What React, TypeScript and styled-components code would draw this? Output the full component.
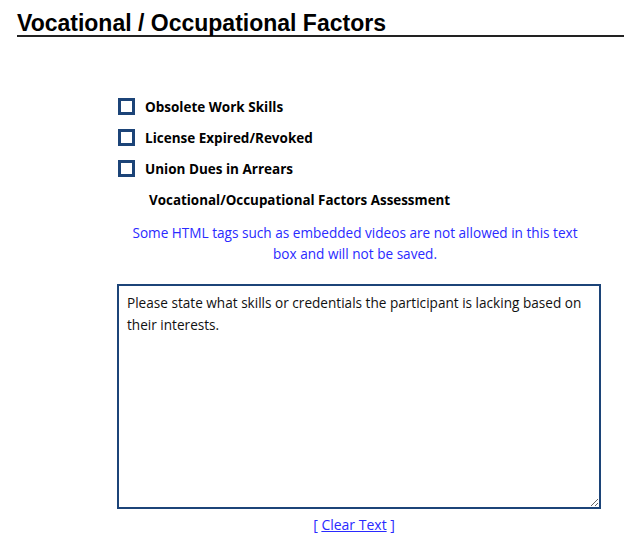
import React from 'react';
import styled, {createGlobalStyle} from "styled-components";

const GlobalStyle = createGlobalStyle`
  body {
    margin: 0;
    background: #ffffff;
    font-family: "Open Sans", "Noto Sans", sans-serif;
  }
`

const factors = [
    'Obsolete Work Skills',
    'License Expired/Revoked',
    'Union Dues in Arrears',
]

export default function App() {
    return (
        <Page>
            <GlobalStyle/>
            <Title>Vocational / Occupational Factors</Title>
            <Section>
                <CheckList>
                    {factors.map(el => (
                        <CheckRow key={el}>
                            <Box/>
                            <CheckLabel>{el}</CheckLabel>
                        </CheckRow>
                    ))}
                </CheckList>
                <SubTitle>Vocational/Occupational Factors Assessment</SubTitle>
                <Notice>
                    Some HTML tags such as embedded videos are not allowed in this text box and will not be saved.
                </Notice>
                <TextBox defaultValue="Please state what skills or credentials the participant is lacking based on their interests."/>
                <ClearRow>
                    [ <ClearLink href="#">Clear Text</ClearLink> ]
                </ClearRow>
            </Section>
        </Page>
    );
}

const Page = styled.div`
  width: 624px;
  height: 551px;
  overflow: hidden;
  padding-top: 12px;
  box-sizing: border-box;
`

const Title = styled.h2`
  margin: 0 0 0 17px;
  font-family: "Liberation Sans", Arial, sans-serif;
  font-size: 23px;
  line-height: 23px;
  font-weight: bold;
  color: #000;
  border-bottom: 2px solid #222;
`

const Section = styled.div`
  margin: 60px 0 0 117px;
  width: 484px;
`

const CheckList = styled.div`
  display: flex;
  flex-direction: column;
  gap: 12px;
  padding-left: 1px;
`

const CheckRow = styled.label`
  display: flex;
  align-items: center;
  gap: 10px;
  height: 19px;
`

const Box = styled.span`
  width: 17px;
  height: 17px;
  box-sizing: border-box;
  border: 3px solid #1c4478;
  background: #fff;
`

const CheckLabel = styled.span`
  font-size: 13.5px;
  font-weight: bold;
  color: #000;
`

const SubTitle = styled.div`
  margin: 13px 0 0 32px;
  font-size: 13.4px;
  font-weight: bold;
  color: #000;
`

const Notice = styled.div`
  margin: 13px auto 0 8px;
  width: 460px;
  text-align: center;
  color: #2a2aff;
  font-size: 13.6px;
  line-height: 21px;
`

const TextBox = styled.textarea`
  display: block;
  margin-top: 20px;
  width: 484px;
  height: 225px;
  box-sizing: border-box;
  border: 2px solid #1c4478;
  padding: 6px 8px;
  font-family: "Open Sans", "Noto Sans", sans-serif;
  font-size: 13.6px;
  line-height: 22px;
  color: #111;
  resize: vertical;
  outline: none;
`

const ClearRow = styled.div`
  margin-top: 6px;
  text-align: center;
  font-size: 14px;
  color: #2a2aff;
  padding-right: 10px;
`

const ClearLink = styled.a`
  color: #2a2aff;
  text-decoration: underline;
`
